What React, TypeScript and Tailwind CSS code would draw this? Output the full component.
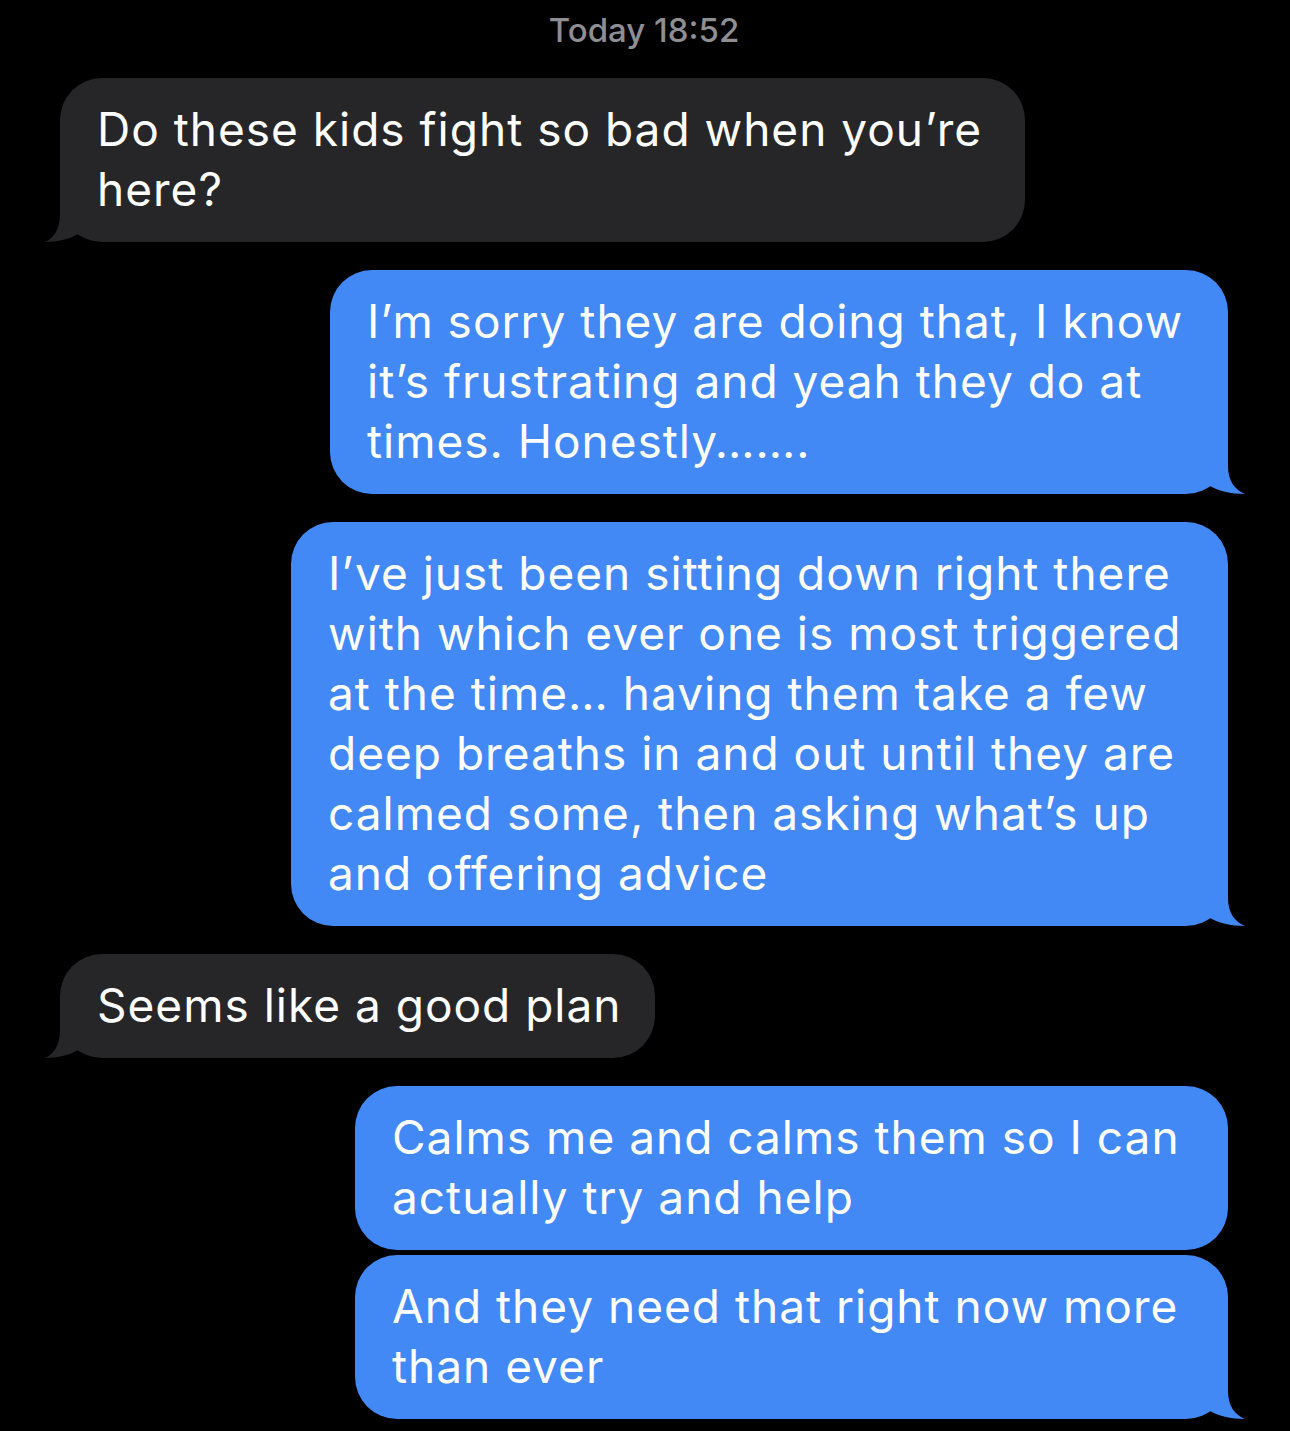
import React from 'react';

type Msg = {
    from: 'me' | 'them';
    lines: string[];
    width: string;
    tail: boolean;
    gap: string;
};

const messages: Msg[] = [
    {
        from: 'them',
        lines: ['Do these kids fight so bad when you’re', 'here?'],
        width: 'w-[965px]',
        tail: true,
        gap: 'mt-0',
    },
    {
        from: 'me',
        lines: [
            'I’m sorry they are doing that, I know',
            'it’s frustrating and yeah they do at',
            'times. Honestly…….',
        ],
        width: 'w-[898px]',
        tail: true,
        gap: 'mt-[28px]',
    },
    {
        from: 'me',
        lines: [
            'I’ve just been sitting down right there',
            'with which ever one is most triggered',
            'at the time… having them take a few',
            'deep breaths in and out until they are',
            'calmed some, then asking what’s up',
            'and offering advice',
        ],
        width: 'w-[937px]',
        tail: true,
        gap: 'mt-[28px]',
    },
    {
        from: 'them',
        lines: ['Seems like a good plan'],
        width: 'w-[595px]',
        tail: true,
        gap: 'mt-[28px]',
    },
    {
        from: 'me',
        lines: ['Calms me and calms them so I can', 'actually try and help'],
        width: 'w-[873px]',
        tail: false,
        gap: 'mt-[28px]',
    },
    {
        from: 'me',
        lines: ['And they need that right now more', 'than ever'],
        width: 'w-[873px]',
        tail: true,
        gap: 'mt-[5px]',
    },
];

const Tail = ({ side, color }: { side: 'left' | 'right'; color: string }) => {
    if (side === 'left') {
        return (
            <svg
                className="absolute left-[-15px] bottom-0"
                width="50"
                height="50"
                viewBox="0 0 50 50"
            >
                <path
                    d="M15,4 L15,22 C15,37 9,46 0,50 C13,50 25,47 35,41 L35,4 Z"
                    fill={color}
                />
            </svg>
        );
    }
    return (
        <svg
            className="absolute right-[-17px] bottom-0"
            width="52"
            height="50"
            viewBox="0 0 52 50"
        >
            <path
                d="M35,4 L35,22 C35,37 42,46 52,50 C38,50 25,47 15,41 L15,4 Z"
                fill={color}
            />
        </svg>
    );
};

const Bubble = ({ msg }: { msg: Msg }) => {
    const mine = msg.from === 'me';
    const color = mine ? '#4289f5' : '#262628';
    return (
        <div className={`flex ${mine ? 'justify-end' : 'justify-start'} ${msg.gap}`}>
            <div
                className={`relative ${msg.width} rounded-[42px] pl-[37px] pr-[30px] pt-[21px] pb-[23px] ${
                    mine ? 'bg-[#4289f5]' : 'bg-[#262628]'
                }`}
            >
                {msg.tail && <Tail side={mine ? 'right' : 'left'} color={color} />}
                <div className="relative text-white text-[46px] leading-[60px] tracking-[1px]">
                    {msg.lines.map((l, i) => (
                        <div key={i} className="whitespace-nowrap">
                            {l}
                        </div>
                    ))}
                </div>
            </div>
        </div>
    );
};

export default function App() {
    return (
        <div
            className="w-[1290px] h-[1431px] bg-black overflow-hidden pl-[60px] pr-[62px]"
            style={{ fontFamily: 'Inter, "Noto Sans", sans-serif' }}
        >
            <div className="pt-[10px] h-[78px] text-center text-[33px] leading-[40px] font-medium text-[#8e8e93]">
                Today 18:52
            </div>
            {messages.map((m, i) => (
                <Bubble key={i} msg={m} />
            ))}
        </div>
    );
}
